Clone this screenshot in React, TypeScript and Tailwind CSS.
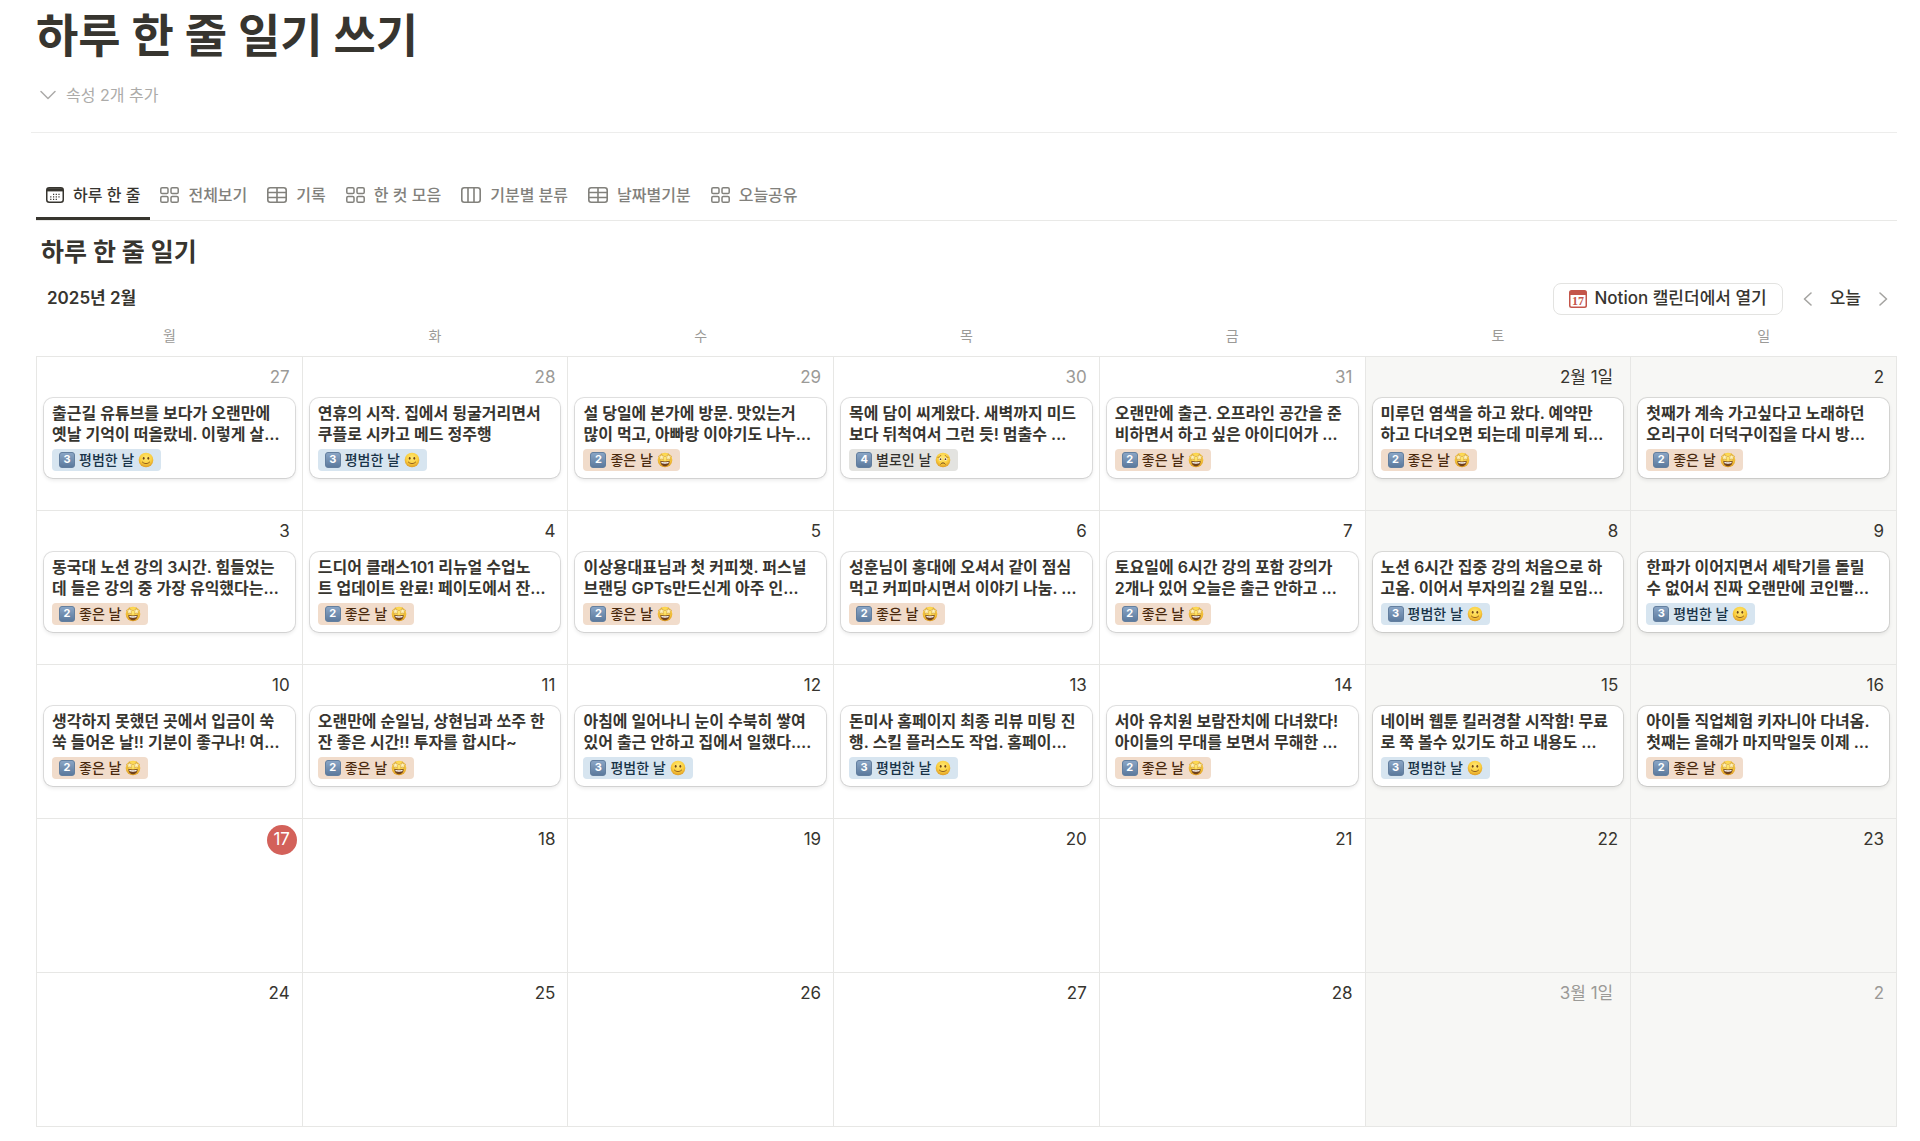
import { useState } from 'react';
import type { ReactNode } from 'react';

type Mood = 'good' | 'normal' | 'bad';

type Day = {
  label: string;
  muted?: boolean;
  today?: boolean;
  monthStart?: boolean;
  lines?: [string, string];
  mood?: Mood;
};

const WEEKDAYS = ['월', '화', '수', '목', '금', '토', '일'];

const WEEKS: Day[][] = [
  [
    { label: '27', muted: true, lines: ['출근길 유튜브를 보다가 오랜만에', '옛날 기억이 떠올랐네. 이렇게 살…'], mood: 'normal' },
    { label: '28', muted: true, lines: ['연휴의 시작. 집에서 뒹굴거리면서', '쿠플로 시카고 메드 정주행'], mood: 'normal' },
    { label: '29', muted: true, lines: ['설 당일에 본가에 방문. 맛있는거', '많이 먹고, 아빠랑 이야기도 나누…'], mood: 'good' },
    { label: '30', muted: true, lines: ['목에 담이 씨게왔다. 새벽까지 미드', '보다 뒤척여서 그런 듯! 멈출수 …'], mood: 'bad' },
    { label: '31', muted: true, lines: ['오랜만에 출근. 오프라인 공간을 준', '비하면서 하고 싶은 아이디어가 …'], mood: 'good' },
    { label: '2월 1일', monthStart: true, lines: ['미루던 염색을 하고 왔다. 예약만', '하고 다녀오면 되는데 미루게 되…'], mood: 'good' },
    { label: '2', lines: ['첫째가 계속 가고싶다고 노래하던', '오리구이 더덕구이집을 다시 방…'], mood: 'good' },
  ],
  [
    { label: '3', lines: ['동국대 노션 강의 3시간. 힘들었는', '데 들은 강의 중 가장 유익했다는…'], mood: 'good' },
    { label: '4', lines: ['드디어 클래스101 리뉴얼 수업노', '트 업데이트 완료! 페이도에서 잔…'], mood: 'good' },
    { label: '5', lines: ['이상용대표님과 첫 커피챗. 퍼스널', '브랜딩 GPTs만드신게 아주 인…'], mood: 'good' },
    { label: '6', lines: ['성훈님이 홍대에 오셔서 같이 점심', '먹고 커피마시면서 이야기 나눔. …'], mood: 'good' },
    { label: '7', lines: ['토요일에 6시간 강의 포함 강의가', '2개나 있어 오늘은 출근 안하고 …'], mood: 'good' },
    { label: '8', lines: ['노션 6시간 집중 강의 처음으로 하', '고옴. 이어서 부자의길 2월 모임…'], mood: 'normal' },
    { label: '9', lines: ['한파가 이어지면서 세탁기를 돌릴', '수 없어서 진짜 오랜만에 코인빨…'], mood: 'normal' },
  ],
  [
    { label: '10', lines: ['생각하지 못했던 곳에서 입금이 쑥', '쑥 들어온 날!! 기분이 좋구나! 여…'], mood: 'good' },
    { label: '11', lines: ['오랜만에 순일님, 상현님과 쏘주 한', '잔 좋은 시간!! 투자를 합시다~'], mood: 'good' },
    { label: '12', lines: ['아침에 일어나니 눈이 수북히 쌓여', '있어 출근 안하고 집에서 일했다.…'], mood: 'normal' },
    { label: '13', lines: ['돈미사 홈페이지 최종 리뷰 미팅 진', '행. 스킬 플러스도 작업. 홈페이…'], mood: 'normal' },
    { label: '14', lines: ['서아 유치원 보람잔치에 다녀왔다!', '아이들의 무대를 보면서 무해한 …'], mood: 'good' },
    { label: '15', lines: ['네이버 웹툰 킬러경찰 시작함! 무료', '로 쭉 볼수 있기도 하고 내용도 …'], mood: 'normal' },
    { label: '16', lines: ['아이들 직업체험 키자니아 다녀옴.', '첫째는 올해가 마지막일듯 이제 …'], mood: 'good' },
  ],
  [
    { label: '17', today: true },
    { label: '18' },
    { label: '19' },
    { label: '20' },
    { label: '21' },
    { label: '22' },
    { label: '23' },
  ],
  [
    { label: '24' },
    { label: '25' },
    { label: '26' },
    { label: '27' },
    { label: '28' },
    { label: '3월 1일', monthStart: true, muted: true },
    { label: '2', muted: true },
  ],
];

const MOODS: Record<Mood, { num: string; text: string; style: string }> = {
  good: { num: '2', text: '좋은 날', style: 'bg-[#f1dccb] text-[#49290e]' },
  normal: { num: '3', text: '평범한 날', style: 'bg-[#d7e5f0] text-[#183347]' },
  bad: { num: '4', text: '별로인 날', style: 'bg-[#e3e3e0] text-[#32302c]' },
};

function CalendarIcon() {
  return (
    <svg viewBox="0 0 18 16" className="h-4 w-[18px] shrink-0" fill="none" stroke="currentColor" strokeWidth="1.5">
      <rect x="0.75" y="0.75" width="16.5" height="14.5" rx="2.5" />
      <path d="M1 2.8h16" strokeWidth="3.2" />
      <g strokeWidth="1.2">
        <path d="M7 7.4h1.2M9.7 7.4h1.2M12.4 7.4h1.2" />
        <path d="M4.2 9.9h1.2M7 9.9h1.2M9.7 9.9h1.2M12.4 9.9h1.2" />
        <path d="M4.2 12.3h1.2M7 12.3h1.2M9.7 12.3h1.2" />
      </g>
    </svg>
  );
}

function GalleryIcon() {
  return (
    <svg viewBox="0 0 19 16" className="h-4 w-[19px] shrink-0" fill="none" stroke="currentColor" strokeWidth="1.5">
      <rect x="0.8" y="0.8" width="7.2" height="5.8" rx="1.3" />
      <rect x="11" y="0.8" width="7.2" height="5.8" rx="1.3" />
      <rect x="0.8" y="9.4" width="7.2" height="5.8" rx="1.3" />
      <rect x="11" y="9.4" width="7.2" height="5.8" rx="1.3" />
    </svg>
  );
}

function TableIcon() {
  return (
    <svg viewBox="0 0 20 16" className="h-4 w-5 shrink-0" fill="none" stroke="currentColor" strokeWidth="1.6">
      <rect x="0.8" y="0.8" width="18.4" height="14.4" rx="2.4" />
      <path d="M1 5.5h18M1 10.5h18M10 1v14" />
    </svg>
  );
}

function BoardIcon() {
  return (
    <svg viewBox="0 0 20 16" className="h-4 w-5 shrink-0" fill="none" stroke="currentColor" strokeWidth="1.6">
      <rect x="0.8" y="0.8" width="18.4" height="14.4" rx="2.4" />
      <path d="M7 1v14M13 1v14" />
    </svg>
  );
}

function Face({ mood }: { mood: Mood }) {
  return (
    <svg viewBox="0 0 16 16" className="size-4 shrink-0" fill="none" strokeLinecap="round">
      <defs>
        <radialGradient id={`face-${mood}`} cx="0.5" cy="0.35" r="0.65">
          <stop offset="0" stopColor="#ffe975" />
          <stop offset="0.6" stopColor="#fbcf3f" />
          <stop offset="1" stopColor="#dd9a25" />
        </radialGradient>
      </defs>
      <circle cx="8" cy="8" r="7.3" fill={`url(#face-${mood})`} />
      {mood === 'good' && (
        <>
          <path d="M3.4 8.8c2.9 1 6.3 1 9.2 0 .2 3.2-1.8 5.5-4.6 5.5s-4.8-2.3-4.6-5.5z" fill="#70401a" />
          <path d="M4.2 9.7c2.4.7 5.2.7 7.6 0l-.4 1.6c-2.2.6-4.6.6-6.8 0z" fill="#fff" />
          <path
            d="M4.5 2l.9 2 2.2.2-1.6 1.6.4 2.300-1.900-1.100-1.900 1.100.4-2.300L1.400 4.200l2.200-.2zM11.500 2l.9 2 2.200.2-1.600 1.600.4 2.300-1.900-1.100-1.900 1.100.4-2.300-1.600-1.600 2.200-.2z"
            fill="#fff3b8"
            stroke="#b8761a"
            strokeWidth="0.4"
          />
        </>
      )}
      {mood === 'normal' && (
        <>
          <ellipse cx="5.7" cy="6.3" rx="0.9" ry="1.4" fill="#70451a" />
          <ellipse cx="10.3" cy="6.3" rx="0.9" ry="1.4" fill="#70451a" />
          <path d="M4.3 10c1.9 2.200 5.500 2.200 7.400 0" stroke="#8a561c" strokeWidth="0.9" />
        </>
      )}
      {mood === 'bad' && (
        <>
          <circle cx="5.3" cy="7" r="1.5" fill="#fff" />
          <circle cx="10.7" cy="7" r="1.5" fill="#fff" />
          <circle cx="5.5" cy="7.2" r="0.9" fill="#5f3c18" />
          <circle cx="10.5" cy="7.2" r="0.9" fill="#5f3c18" />
          <path d="M2.9 5.4c1.2 0 2.3-.8 2.8-1.9M13.1 5.4c-1.2 0-2.3-.8-2.8-1.9" stroke="#9a6420" strokeWidth="0.8" />
          <path d="M5.8 12c1.1-1.6 3.3-1.6 4.4 0" stroke="#70451a" strokeWidth="1" />
        </>
      )}
    </svg>
  );
}

function MoodTag({ mood }: { mood: Mood }) {
  const { num, text, style } = MOODS[mood];
  return (
    <span className={`inline-flex h-[22px] items-center gap-1 rounded-[4px] px-[7px] text-sm leading-[22px] font-medium ${style}`}>
      <span className="flex size-4 items-center justify-center rounded-[3px] border border-[#637f9f] bg-linear-to-b from-[#8aa5c5] to-[#5c7a9d] text-[11px] leading-none font-bold text-white">
        {num}
      </span>
      {text}
      <Face mood={mood} />
    </span>
  );
}

function EntryCard({ lines, mood }: { lines: [string, string]; mood: Mood }) {
  return (
    <a
      href="#"
      className="mx-[7px] block rounded-[9px] bg-white px-2 pt-[5px] pb-[7px] text-base leading-[21px] font-semibold whitespace-nowrap shadow-[0_0_0_1px_rgba(15,15,15,0.12),0_2px_4px_rgba(15,15,15,0.1)]"
    >
      <span className="block">{lines[0]}</span>
      <span className="block">{lines[1]}</span>
      <span className="mt-1 flex">
        <MoodTag mood={mood} />
      </span>
    </a>
  );
}

function DayCell({ day, weekend }: { day: Day; weekend: boolean }) {
  return (
    <td className={`h-[154px] border border-[#e7e7e5] p-0 align-top ${weekend ? 'bg-[#f7f7f5]' : ''}`}>
      <div className="flex h-[41px] items-center justify-end pt-[2px] pr-[5px] text-[17px]">
        {day.today ? (
          <span className="flex size-[30px] items-center justify-center rounded-full bg-[#d3615a] text-white">{day.label}</span>
        ) : (
          <span className={`${day.monthStart ? 'pr-3' : 'pr-[7px]'} ${day.muted ? 'text-[#9b9a97]' : ''}`}>{day.label}</span>
        )}
      </div>
      {day.lines && day.mood && <EntryCard lines={day.lines} mood={day.mood} />}
    </td>
  );
}

const TABS: { name: string; icon: ReactNode }[] = [
  { name: '하루 한 줄', icon: <CalendarIcon /> },
  { name: '전체보기', icon: <GalleryIcon /> },
  { name: '기록', icon: <TableIcon /> },
  { name: '한 컷 모음', icon: <GalleryIcon /> },
  { name: '기분별 분류', icon: <BoardIcon /> },
  { name: '날짜별기분', icon: <TableIcon /> },
  { name: '오늘공유', icon: <GalleryIcon /> },
];

export default function App() {
  const [active, setActive] = useState(0);

  return (
    <main className="min-h-screen bg-white pr-[23px] pb-4 pl-9 font-[Inter,'Noto_Sans_CJK_KR',sans-serif] text-[#37352f]">
      <h1 className="pt-1 text-[46px] leading-[62px] font-bold">하루 한 줄 일기 쓰기</h1>

      <button className="mt-[13px] flex h-8 items-center gap-[10px] pl-1 text-base text-[#acaba9]">
        <svg viewBox="0 0 16 10" className="h-[10px] w-4" fill="none" stroke="currentColor" strokeWidth="1.5" strokeLinecap="round" strokeLinejoin="round">
          <path d="M1 1.5l7 7 7-7" />
        </svg>
        속성 2개 추가
      </button>

      <hr className="mt-[21px] -ml-[5px] border-[#ededec]" />

      <nav className="mt-[39px] flex h-[49px] border-b border-[#e9e9e7]">
        {TABS.map((tab, i) => (
          <button
            key={tab.name}
            onClick={() => setActive(i)}
            className={`flex items-center gap-[9px] border-b-3 px-[10px] text-base font-medium ${
              i === active ? 'border-[#37352f]' : 'border-transparent text-[#82817c]'
            }`}
          >
            {tab.icon}
            {tab.name}
          </button>
        ))}
      </nav>

      <h2 className="mt-[13px] pl-[5px] text-[25px] leading-9 font-bold">하루 한 줄 일기</h2>

      <div className="mt-[11px] flex h-9 items-center justify-between pl-[11px]">
        <h3 className="text-[17px] font-semibold">2025년 2월</h3>
        <div className="flex items-center text-[17px] font-medium">
          <button className="flex h-8 items-center gap-[7px] rounded-lg border border-[#e3e3e1] px-[15px]">
            <svg viewBox="0 0 18 18" className="size-[18px]">
              <rect width="18" height="18" rx="2.5" fill="#c4554a" />
              <path d="M1.5 5h15v10.5a1 1 0 0 1-1 1h-13a1 1 0 0 1-1-1z" fill="#fff" />
              <text x="9" y="14.8" textAnchor="middle" fontSize="12" fontWeight="700" fill="#c4554a" fontFamily="Liberation Serif, serif">
                17
              </text>
            </svg>
            Notion 캘린더에서 열기
          </button>
          <button aria-label="이전 달" className="ml-5 text-[#a5a4a1]">
            <svg viewBox="0 0 9 14" className="h-[14px] w-[9px]" fill="none" stroke="currentColor" strokeWidth="1.6" strokeLinecap="round" strokeLinejoin="round">
              <path d="M8 1L1.5 7 8 13" />
            </svg>
          </button>
          <button className="mx-[18px]">오늘</button>
          <button aria-label="다음 달" className="mr-[9px] text-[#a5a4a1]">
            <svg viewBox="0 0 9 14" className="h-[14px] w-[9px]" fill="none" stroke="currentColor" strokeWidth="1.6" strokeLinecap="round" strokeLinejoin="round">
              <path d="M1 1l6.5 6L1 13" />
            </svg>
          </button>
        </div>
      </div>

      <table className="w-full table-fixed border-collapse">
        <thead>
          <tr>
            {WEEKDAYS.map((name) => (
              <th key={name} className="h-[39px] p-0 text-sm font-normal text-[#9b9a97]">
                {name}
              </th>
            ))}
          </tr>
        </thead>
        <tbody>
          {WEEKS.map((week, w) => (
            <tr key={w}>
              {week.map((day, i) => (
                <DayCell key={i} day={day} weekend={i > 4} />
              ))}
            </tr>
          ))}
        </tbody>
      </table>
    </main>
  );
}
